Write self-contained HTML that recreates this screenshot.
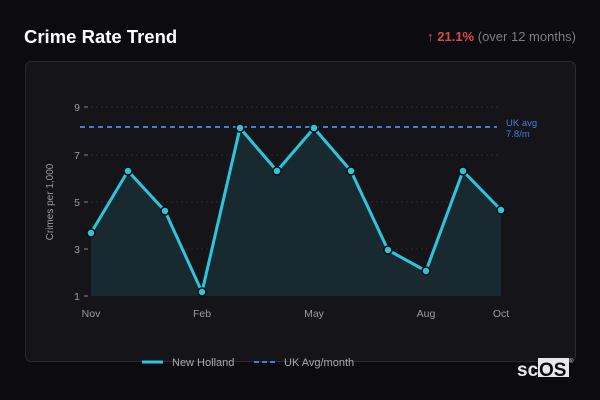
<!DOCTYPE html>
<html><head><style>
body{margin:0;width:600px;height:400px;background:#0c0b0f;font-family:"Liberation Sans","DejaVu Sans",sans-serif;position:relative;overflow:hidden}
.t{position:absolute;left:24px;top:26px;color:#fff;font-weight:bold;font-size:18.5px;font-family:"Liberation Sans",sans-serif}
.r{position:absolute;right:24px;top:29px;font-size:13px;color:#7c7c82;font-family:"Liberation Sans",sans-serif}
.r b{color:#e0454f}
.card{position:absolute;left:25px;top:61px;width:549px;height:299px;background:#151418;border:1px solid #2a2a2e;border-radius:6px}
svg{position:absolute;left:0;top:0}
text{font-family:"Liberation Sans",sans-serif}
</style></head><body>
<div class="t">Crime Rate Trend</div>
<div class="r"><b>↑ 21.1%</b> (over 12 months)</div>
<div class="card"></div>
<svg width="600" height="400">
<g stroke="#2a2a2e" stroke-dasharray="2 3" stroke-width="1">
<line x1="91" y1="107" x2="501" y2="107"/><line x1="91" y1="155" x2="501" y2="155"/><line x1="91" y1="202" x2="501" y2="202"/><line x1="91" y1="249" x2="501" y2="249"/>
</g>
<g stroke="#888" stroke-width="1"><line x1="84" y1="107" x2="88" y2="107"/><line x1="84" y1="155" x2="88" y2="155"/><line x1="84" y1="202" x2="88" y2="202"/><line x1="84" y1="249" x2="88" y2="249"/><line x1="84" y1="296" x2="88" y2="296"/></g>
<g fill="#9a9aa0" font-size="10.5" text-anchor="end"><text x="80" y="111">9</text><text x="80" y="159">7</text><text x="80" y="206">5</text><text x="80" y="253">3</text><text x="80" y="300">1</text></g>
<text x="0" y="0" transform="translate(53,202) rotate(-90)" fill="#9a9aa0" font-size="10" text-anchor="middle">Crimes per 1,000</text>
<g fill="#9a9aa0" font-size="10.5" text-anchor="middle"><text x="91" y="317">Nov</text><text x="202" y="317">Feb</text><text x="314" y="317">May</text><text x="426" y="317">Aug</text><text x="501" y="317">Oct</text></g>
<polygon fill="#18292f" points="91,296 91,233 128,171 165,211 202,292 240,128 277,171 314,128 351,171 388,250 426,271 463,171 501,210 501,296"/>
<line x1="80" y1="127" x2="497" y2="127" stroke="#3e7fe0" stroke-width="2" stroke-dasharray="5 4"/>
<text x="506" y="126" fill="#3e7fe0" font-size="9.5">UK avg</text><text x="506" y="137" fill="#3e7fe0" font-size="9.5">7.8/m</text>
<polyline fill="none" stroke="#2bc6dc" stroke-width="3" stroke-linejoin="round" points="91,233 128,171 165,211 202,292 240,128 277,171 314,128 351,171 388,250 426,271 463,171 501,210"/>
<g fill="#2bc6dc" stroke="#0c0b0f" stroke-width="1.5">
<circle cx="91" cy="233" r="4"/><circle cx="128" cy="171" r="4"/><circle cx="165" cy="211" r="4"/><circle cx="202" cy="292" r="4"/><circle cx="240" cy="128" r="4"/><circle cx="277" cy="171" r="4"/><circle cx="314" cy="128" r="4"/><circle cx="351" cy="171" r="4"/><circle cx="388" cy="250" r="4"/><circle cx="426" cy="271" r="4"/><circle cx="463" cy="171" r="4"/><circle cx="501" cy="210" r="4"/>
</g>
<line x1="142" y1="362" x2="163" y2="362" stroke="#2bc6dc" stroke-width="3"/>
<text x="172" y="366" fill="#a8a8ae" font-size="11">New Holland</text>
<line x1="254" y1="362" x2="276" y2="362" stroke="#3e7fe0" stroke-width="2" stroke-dasharray="5 3"/>
<text x="284" y="366" fill="#a8a8ae" font-size="11">UK Avg/month</text>
<rect x="538" y="358" width="31" height="19" fill="#e8e8e8"/>
<text x="517" y="376" fill="#e8e8e8" font-size="19" font-weight="bold">sc</text>
<text x="539" y="376" fill="#0c0b0f" font-size="19" font-weight="bold">OS</text>
<text x="569" y="363" fill="#ccc" font-size="6">®</text>
</svg>
</body></html>
